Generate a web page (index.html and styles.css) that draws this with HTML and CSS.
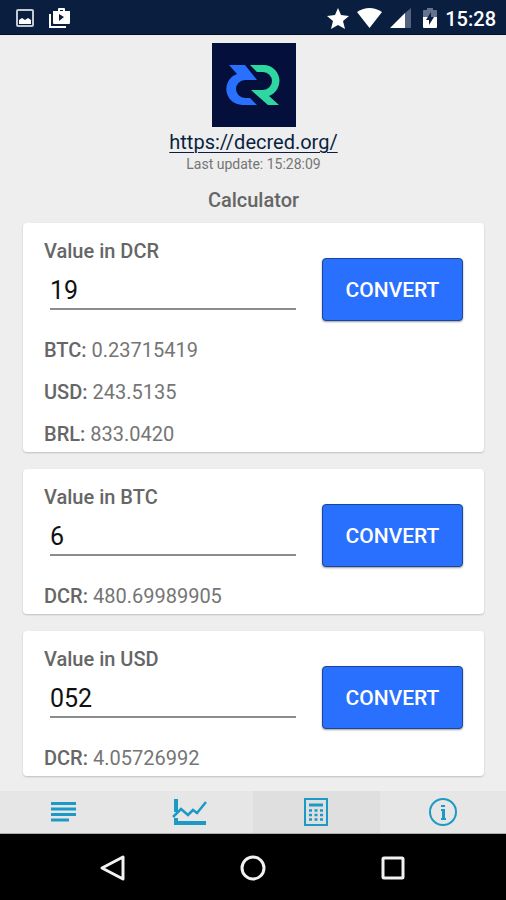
FILE: index.html
```
<!DOCTYPE html>
<html lang="en">
<head>
    <meta charset="UTF-8">
    <meta name="viewport" content="width=device-width, initial-scale=1.0">
    <title>Decred Calculator</title>
    <link rel="stylesheet" href="styles.css">
</head>
<body>
    <header class="status-bar">
        <div class="status-group">
            <svg width="18" height="18" viewBox="0 0 18 18">
                <rect x="1" y="1" width="16" height="16" rx="1" fill="none" stroke="#c3cad6" stroke-width="2"/>
                <path d="M3 15v-4l3-2 3 2 3-2 3 2v4z" fill="#fff"/>
            </svg>
            <svg width="22" height="22" viewBox="0 0 22 22">
                <path d="M1 7v13h16" fill="none" stroke="#fff" stroke-width="2"/>
                <path fill="#fff" fill-rule="evenodd" d="M4 4h5V2q0-1 1-1h5q1 0 1 1v2h5v12q0 1-1 1H5q-1 0-1-1zM11 4h3V3h-3zM10 7v7l5-4z"/>
            </svg>
        </div>
        <div class="status-group status-right">
            <svg width="22" height="21" viewBox="0 0 22 21">
                <path fill="#fff" d="M11 0l3 7 8 1-6 5 2 8-7-4-7 4 2-8-6-5 8-1z"/>
            </svg>
            <svg width="25" height="20" viewBox="0 0 25 20">
                <path fill="#fff" d="M0 4Q12.500-4 25 4L12.500 20z"/>
            </svg>
            <svg class="signal" width="21" height="20" viewBox="0 0 21 20">
                <path fill="#52627f" d="M15 5l6-5v20h-6z"/>
                <path fill="#fff" d="M0 20L15 5v15z"/>
            </svg>
            <svg class="battery" width="14" height="20" viewBox="0 0 14 20">
                <path fill="#65738c" d="M0 9V3q0-1 1-1h3V0h6v2h3q1 0 1 1v6z"/>
                <path fill="#fff" d="M0 9h14v10q0 1-1 1H1q-1 0-1-1z"/>
                <path fill="#0a1f3f" d="M8 4L3 12h3v5l5-8H8z"/>
            </svg>
            <span class="clock">15:28</span>
        </div>
    </header>

    <main class="content">
        <div class="brand">
            <svg class="logo" viewBox="0 0 84 84">
                <rect width="84" height="84" fill="#04103b"/>
                <path fill="#2970ff" d="M17 22h16l12 15H33a9 9 0 0 0 0 18h5l7 7H32a16 16 0 0 1-7-31z"/>
                <path fill="#2ed6a1" d="M38 22h14a16 16 0 0 1 5 31l10 9H56L39 47h12a9 9 0 0 0 0-18h-6z"/>
            </svg>
            <a class="site-link" href="https://decred.org/">https://decred.org/</a>
            <p class="updated">Last update: 15:28:09</p>
            <h1>Calculator</h1>
        </div>

        <form class="card">
            <div class="convert-row">
                <div class="field">
                    <label for="dcrValue">Value in DCR</label>
                    <input type="text" id="dcrValue" inputmode="decimal" value="19">
                </div>
                <button type="button">CONVERT</button>
            </div>
            <div class="results">
                <p><strong>BTC:</strong> 0.23715419</p>
                <p><strong>USD:</strong> 243.5135</p>
                <p><strong>BRL:</strong> 833.0420</p>
            </div>
        </form>

        <form class="card">
            <div class="convert-row">
                <div class="field">
                    <label for="btcValue">Value in BTC</label>
                    <input type="text" id="btcValue" inputmode="decimal" value="6">
                </div>
                <button type="button">CONVERT</button>
            </div>
            <div class="results">
                <p><strong>DCR:</strong> 480.69989905</p>
            </div>
        </form>

        <form class="card">
            <div class="convert-row">
                <div class="field">
                    <label for="usdValue">Value in USD</label>
                    <input type="text" id="usdValue" inputmode="decimal" value="052">
                </div>
                <button type="button">CONVERT</button>
            </div>
            <div class="results">
                <p><strong>DCR:</strong> 4.05726992</p>
            </div>
        </form>
    </main>

    <nav class="tabs">
        <a href="#summary" aria-label="Summary">
            <svg width="25" height="20" viewBox="0 0 25 20">
                <path d="M0 1.500h25M0 7h25M0 12.500h25M0 18h18" stroke="#1c9ac6" stroke-width="3"/>
            </svg>
        </a>
        <a href="#chart" aria-label="Chart">
            <svg width="35" height="28" viewBox="0 0 35 28" fill="none" stroke="#1c9ac6">
                <path d="M4 1v13M4 20v5h30" stroke-width="4"/>
                <path d="M1 19l8-8 7 6 5-5 4 3 9-11" stroke-width="2.500"/>
            </svg>
        </a>
        <a class="active" href="#calculator" aria-label="Calculator">
            <svg width="24" height="28" viewBox="0 0 24 28">
                <rect x="1" y="1" width="22" height="26" fill="none" stroke="#1c9ac6" stroke-width="2"/>
                <path d="M5 7h14" stroke="#1c9ac6" stroke-width="3"/>
                <path d="M5 12.500h14M5 17h14M5 21.500h14" stroke="#1c9ac6" stroke-width="2.500" stroke-dasharray="3 2.500"/>
            </svg>
        </a>
        <a href="#info" aria-label="Info">
            <svg width="30" height="30" viewBox="0 0 30 30">
                <circle cx="15" cy="15" r="13" fill="none" stroke="#1c9ac6" stroke-width="2"/>
                <path d="M13 9h4M13 13h3v9M13 22h5" fill="none" stroke="#1c9ac6" stroke-width="2"/>
                <path d="M15.500 12v10" stroke="#1c9ac6" stroke-width="3"/>
            </svg>
        </a>
    </nav>

    <footer class="system-nav">
        <button type="button" aria-label="Back">
            <svg width="28" height="28" viewBox="0 0 28 28">
                <path d="M24 3v22L3 14z" fill="none" stroke="#f2f2f2" stroke-width="3" stroke-linejoin="round"/>
            </svg>
        </button>
        <button type="button" aria-label="Home">
            <svg width="28" height="28" viewBox="0 0 28 28">
                <circle cx="14" cy="14" r="11" fill="none" stroke="#f2f2f2" stroke-width="3"/>
            </svg>
        </button>
        <button type="button" aria-label="Recent apps">
            <svg width="28" height="28" viewBox="0 0 28 28">
                <rect x="4" y="4" width="20" height="20" rx="1" fill="none" stroke="#f2f2f2" stroke-width="3"/>
            </svg>
        </button>
    </footer>
</body>
</html>
```
FILE: styles.css
```
* {
    box-sizing: border-box;
}
body {
    margin: 0;
    min-height: 100vh;
    display: flex;
    flex-direction: column;
    font-family: Roboto, sans-serif;
    background-color: #eeeeee;
    color: #757575;
}
p, h1 {
    margin: 0;
}
svg {
    display: block;
}
.status-bar {
    display: flex;
    justify-content: space-between;
    align-items: center;
    height: 35px;
    padding: 2px 10px 0 16px;
    background-color: #0a1f3f;
    border-bottom: 1px solid #050f20;
}
.status-group {
    display: flex;
    align-items: center;
    gap: 15px;
}
.status-right {
    gap: 8px;
}
.battery {
    margin-left: 4px;
}
.clock {
    font-size: 20px;
    font-weight: 500;
    line-height: 24px;
    padding-top: 1px;
    color: #fff;
}
.content {
    flex: 1;
    padding: 8px 22px 15px 23px;
}
.brand {
    display: flex;
    flex-direction: column;
    align-items: center;
    margin-bottom: 11px;
}
.logo {
    width: 84px;
    height: 84px;
}
.site-link {
    margin-top: 3px;
    font-size: 20px;
    line-height: 24px;
    color: #0a1f3f;
    text-decoration-thickness: 1px;
    text-underline-offset: 3px;
}
.updated {
    font-size: 14px;
    line-height: 20px;
}
h1 {
    margin-top: 14px;
    font-size: 20px;
    font-weight: 500;
    line-height: 24px;
    color: #666;
}
.card {
    padding: 16px 21px 7px;
    background-color: #fff;
    border-radius: 4px;
    box-shadow: 0 1px 2px rgba(0,0,0,0.2);
}
.card + .card {
    margin-top: 17px;
}
.convert-row {
    display: flex;
    gap: 26px;
}
.field {
    flex: 1;
    min-width: 0;
}
.field label {
    display: block;
    font-size: 20px;
    font-weight: 500;
    line-height: 24px;
    color: #666;
}
.field input {
    display: block;
    width: calc(100% - 6px);
    height: 47px;
    margin-left: 6px;
    padding: 10px 0 0;
    border: none;
    border-bottom: 2px solid #8c8c8c;
    font-family: inherit;
    font-size: 25px;
    color: #111;
    background: none;
    outline: none;
}
.convert-row button {
    flex: none;
    width: 141px;
    height: 63px;
    margin-top: 19px;
    padding: 0;
    border: 1px solid #1b4699;
    border-radius: 4px;
    font-family: inherit;
    font-size: 21px;
    font-weight: 500;
    color: #fff;
    background-color: #2970ff;
    box-shadow: 0 1px 2px rgba(0,0,0,0.4);
}
.results {
    display: flex;
    flex-direction: column;
    gap: 20px;
    margin-top: 18px;
    font-size: 20px;
    line-height: 22px;
}
.results strong {
    font-weight: 500;
    color: #666;
}
.tabs {
    display: grid;
    grid-template-columns: repeat(4, 1fr);
    height: 43px;
    background-color: #e6e6e6;
    border-bottom: 1px solid #b0b0b0;
}
.tabs a {
    display: flex;
    align-items: center;
    justify-content: center;
}
.tabs .active {
    background-color: #dfdfdf;
}
.system-nav {
    display: flex;
    justify-content: center;
    gap: 112px;
    height: 67px;
    background-color: #000;
}
.system-nav button {
    padding: 0;
    border: none;
    background: none;
}
```
